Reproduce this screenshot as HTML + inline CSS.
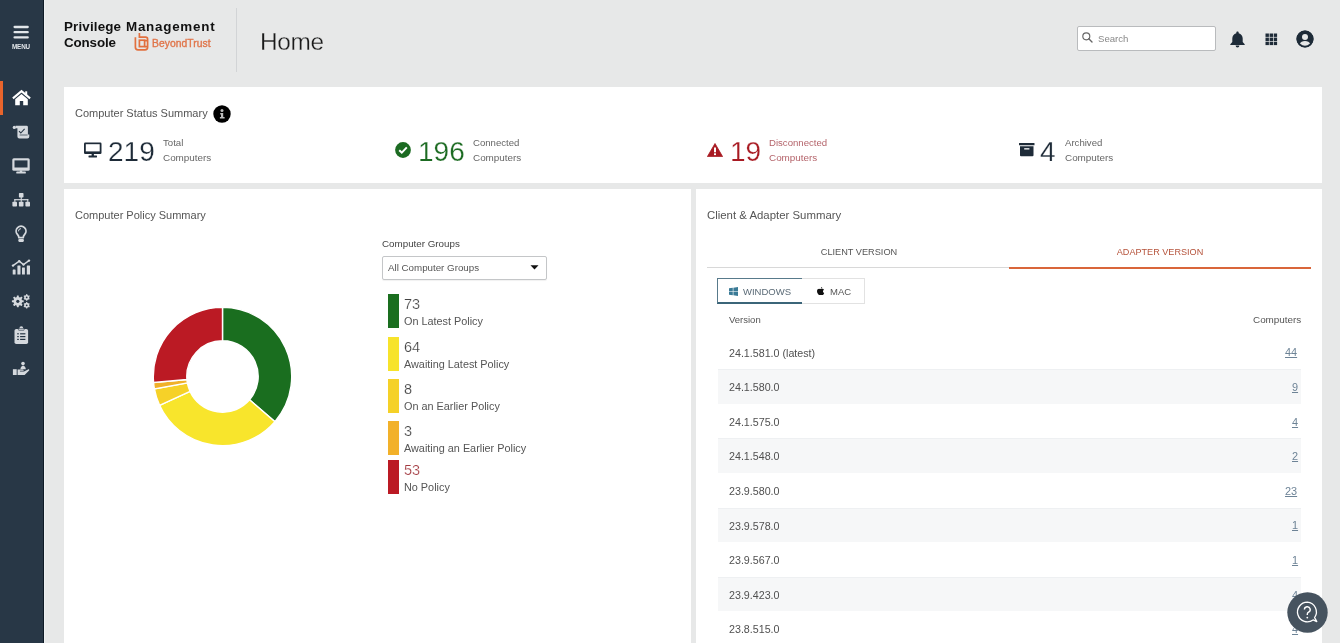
<!DOCTYPE html>
<html><head><meta charset="utf-8"><title>Home</title>
<style>
html,body{margin:0;padding:0;width:1340px;height:643px;overflow:hidden;background:#e7e8e8;font-family:"Liberation Sans",sans-serif;}
.t{position:absolute;white-space:nowrap;line-height:1;will-change:transform;}
#side{position:absolute;left:0;top:0;width:42.5px;height:643px;background:#283746;}
#sideedge{position:absolute;left:42.5px;top:0;width:1px;height:643px;background:#0e1a25;}
#sidelight{position:absolute;left:43.5px;top:0;width:1.5px;height:643px;background:#edf0f2;}
.card{position:absolute;background:#fff;}
svg{display:block}
</style></head><body>
<div id="side"></div><div id="sideedge"></div><div id="sidelight"></div><svg style="position:absolute;left:0;top:0" width="43" height="50" viewBox="0 0 43 50"><g stroke="#e2e6ea" stroke-width="2.3" stroke-linecap="round"><path d="M14.6 27 H27.7"/><path d="M14.6 32.2 H27.7"/><path d="M14.6 37.4 H27.7"/></g></svg><div class="t" style="left:12.2px;top:43.57px;font-size:6.3px;color:#e2e6ea;font-weight:bold;letter-spacing:-0.15px">MENU</div>
<div style="position:absolute;left:0;top:81px;width:2.5px;height:34.4px;background:#e8642c"></div><svg style="position:absolute;left:0;top:80px" width="43" height="310" viewBox="0 80 43 310">
<!-- home -->
<path d="M12.9 98.4 L21.5 91.2 L30.1 98.4" fill="none" stroke="#fff" stroke-width="2.1" stroke-linejoin="miter"/>
<rect x="25.2" y="91.3" width="2" height="4.2" fill="#fff"/>
<path d="M15.2 99.2 L21.5 93.9 L27.8 99.2 V105.2 H23.2 V101 H19.8 V105.2 H15.2 Z" fill="#fff"/>
<!-- scroll -->
<g fill="#d5d9de">
<circle cx="14.3" cy="127.4" r="1.6"/>
<path d="M15.6 125.8 H26.6 a1.3 1.3 0 0 1 1.3 1.3 V134.6 H29.3 V136.4 a2 2 0 0 1 -2 2 H19.4 a2 2 0 0 1 -2 -2 V128.2 H15.6 Z"/>
</g>
<path d="M19 131.2 L20.8 133 L24.6 128.8" fill="none" stroke="#283746" stroke-width="1.1"/>
<path d="M19.6 135 H27.6" stroke="#283746" stroke-width="0.7"/>
<!-- monitor -->
<rect x="12.3" y="158.2" width="17.4" height="12.6" rx="1.6" fill="#d5d9de"/>
<rect x="14.5" y="160.4" width="13" height="7.1" fill="#283746"/>
<rect x="19.8" y="170.4" width="2.4" height="1.6" fill="#d5d9de"/>
<rect x="16.2" y="171.5" width="9.7" height="2.1" rx="0.9" fill="#d5d9de"/>
<!-- org chart -->
<g fill="#d5d9de">
<rect x="18.9" y="193" width="4.6" height="4.4" rx="0.7"/>
<rect x="20.7" y="197" width="1.1" height="2.6"/>
<rect x="14.3" y="199.1" width="14" height="1.2"/>
<rect x="14.3" y="199.1" width="1.1" height="2.8"/>
<rect x="27.2" y="199.1" width="1.1" height="2.8"/>
<rect x="20.7" y="199.1" width="1.1" height="2.8"/>
<rect x="12.4" y="201.7" width="4.6" height="4.8" rx="0.7"/>
<rect x="18.9" y="201.7" width="4.6" height="4.8" rx="0.7"/>
<rect x="25.4" y="201.7" width="4.6" height="4.8" rx="0.7"/>
</g>
<!-- lightbulb -->
<path d="M18.9 237.6 C18.8 236.2 18.2 235.3 17.4 234.4 A4.9 4.9 0 1 1 24.7 234.4 C23.9 235.3 23.3 236.2 23.2 237.6 Z" fill="none" stroke="#d5d9de" stroke-width="1.8" stroke-linejoin="round"/>
<path d="M18.4 231.4 A2.8 2.8 0 0 1 21 228.6" fill="none" stroke="#d5d9de" stroke-width="1"/>
<rect x="18.3" y="238.9" width="5.6" height="3" rx="1.1" fill="#d5d9de"/>
<!-- chart -->
<g fill="#d5d9de">
<path d="M13 265.6 L19.2 261.2 L23.5 264.6 L29 260.6" fill="none" stroke="#d5d9de" stroke-width="1.5"/>
<circle cx="13" cy="265.6" r="1.2"/><circle cx="19.2" cy="261.2" r="1.2"/><circle cx="23.5" cy="264.6" r="1.2"/><circle cx="29" cy="260.6" r="1.2"/>
<rect x="12.7" y="269.6" width="2.9" height="5" rx="0.4"/>
<rect x="17.4" y="265.6" width="3.1" height="9" rx="0.4"/>
<rect x="22" y="267.4" width="2.9" height="7.2" rx="0.4"/>
<rect x="26.8" y="265.6" width="3.2" height="9" rx="0.4"/>
</g>
<!-- gears -->
<g fill="#d5d9de">
<circle cx="17.8" cy="301.3" r="4.4"/>
<rect x="16.8" y="295.4" width="2" height="11.8" rx="0.4" transform="rotate(0 17.8 301.3)"/><rect x="16.8" y="295.4" width="2" height="11.8" rx="0.4" transform="rotate(45 17.8 301.3)"/><rect x="16.8" y="295.4" width="2" height="11.8" rx="0.4" transform="rotate(90 17.8 301.3)"/><rect x="16.8" y="295.4" width="2" height="11.8" rx="0.4" transform="rotate(135 17.8 301.3)"/>
<circle cx="26.7" cy="297.4" r="2.5"/>
<rect x="26.1" y="294.1" width="1.2" height="6.6" rx="0.3" transform="rotate(0 26.7 297.4)"/><rect x="26.1" y="294.1" width="1.2" height="6.6" rx="0.3" transform="rotate(60 26.7 297.4)"/><rect x="26.1" y="294.1" width="1.2" height="6.6" rx="0.3" transform="rotate(120 26.7 297.4)"/>
<circle cx="26.7" cy="305.3" r="2.5"/>
<rect x="26.1" y="302" width="1.2" height="6.6" rx="0.3" transform="rotate(0 26.7 305.3)"/><rect x="26.1" y="302" width="1.2" height="6.6" rx="0.3" transform="rotate(60 26.7 305.3)"/><rect x="26.1" y="302" width="1.2" height="6.6" rx="0.3" transform="rotate(120 26.7 305.3)"/>
</g>
<circle cx="17.8" cy="301.3" r="1.6" fill="#283746"/>
<circle cx="26.7" cy="297.4" r="0.9" fill="#283746"/>
<circle cx="26.7" cy="305.3" r="0.9" fill="#283746"/>
<!-- clipboard -->
<rect x="14.5" y="328.9" width="13.6" height="15.1" rx="1.8" fill="#d5d9de"/>
<circle cx="21.3" cy="328.2" r="1.9" fill="#d5d9de"/>
<rect x="18.4" y="328.6" width="5.8" height="1.7" rx="0.6" fill="#d5d9de" stroke="#283746" stroke-width="0.6"/>
<g fill="#283746">
<rect x="17.2" y="333.2" width="1.6" height="1.2"/><rect x="20.1" y="333.2" width="5.3" height="1.2"/>
<rect x="17.2" y="336" width="1.6" height="1.2"/><rect x="20.1" y="336" width="5.3" height="1.2"/>
<rect x="17.2" y="338.8" width="1.6" height="1.2"/><rect x="20.1" y="338.8" width="5.3" height="1.2"/>
</g>
<!-- hand -->
<g fill="#d5d9de">
<circle cx="23" cy="363.6" r="1.8"/>
<path d="M20.4 369.3 C20.6 367.1 21.6 365.7 23.1 365.7 C24.6 365.7 25.6 367.1 25.8 369.3 Z"/>
<rect x="12.9" y="369.2" width="3.8" height="5.8"/>
<path d="M17.6 369.6 H22.3 c0.9 0 1.4 0.5 1.4 1.1 H19.9 V371.6 H24 L28 369.4 c0.9 -0.45 1.7 0.4 1.1 1.1 L24.6 375 H17.6 Z"/>
</g>
</svg><div class="t" style="left:63.8px;top:19.56px;font-size:13.4px;font-weight:bold;color:#111;letter-spacing:0.15px">Privilege</div>
<div class="t" style="left:125.8px;top:19.56px;font-size:13.4px;font-weight:bold;color:#111;letter-spacing:0.75px">Management</div>
<div class="t" style="left:63.8px;top:35.96px;font-size:13.4px;font-weight:bold;color:#111;letter-spacing:-0.15px">Console</div>
<svg style="position:absolute;left:134px;top:32px" width="16" height="20" viewBox="0 0 16 20">
<g fill="none" stroke="#e2703f" stroke-width="1.7">
<path d="M5.4 1 V5.2 H11.6 a2 2 0 0 1 2 2 V15.2 a2.6 2.6 0 0 1 -2.6 2.6 H4 a2.6 2.6 0 0 1 -2.6 -2.6 V5.2"/>
<rect x="5.4" y="8.2" width="5.2" height="6.4"/>
<path d="M13.6 8.6 H10.6"/><path d="M13.6 14.6 H10.6"/>
</g>
</svg><div class="t" style="left:152.4px;top:38.68px;font-size:10.3px;color:#e0754a;letter-spacing:0.05px;-webkit-text-stroke:0.35px #e0754a">BeyondTrust</div>
<div style="position:absolute;left:236px;top:8px;width:1px;height:64px;background:#d2d4d6"></div><div class="t" style="left:260px;top:30.25px;font-size:24.4px;color:#1a1a1a;letter-spacing:-0.3px;-webkit-text-stroke:0.3px #e7e8e8">Home</div>
<div style="position:absolute;left:1077px;top:26px;width:137px;height:23px;border:1px solid #b9bbbd;border-radius:2px;background:#fff"></div><svg style="position:absolute;left:1082px;top:32px" width="11" height="11" viewBox="0 0 11 11">
<circle cx="4.3" cy="4.3" r="3.5" fill="none" stroke="#666" stroke-width="1.15"/>
<path d="M6.8 6.8 L10 10" stroke="#666" stroke-width="1.35" stroke-linecap="round"/></svg><div class="t" style="left:1097.5px;top:34.37px;font-size:9.6px;color:#888">Search</div>
<svg style="position:absolute;left:1229px;top:31px" width="17" height="17" viewBox="0 0 17 17">
<path d="M8.5 0.6 c-0.7 0 -1.2 0.5 -1.2 1.1 v0.5 C4.8 2.8 3.3 4.9 3.3 7.4 V11 L1.3 13.2 V14 H15.7 V13.2 L13.7 11 V7.4 C13.7 4.9 12.2 2.8 9.7 2.2 V1.7 C9.7 1.1 9.2 0.6 8.5 0.6 Z" fill="#1e2b38"/>
<path d="M6.6 14.6 a1.9 1.9 0 0 0 3.8 0 Z" fill="#1e2b38"/></svg><svg style="position:absolute;left:1265px;top:33px" width="13" height="13" viewBox="0 0 13 13"><g fill="#1e2b38"><rect x="0.5" y="0.5" width="3.4" height="3.4"/><rect x="0.5" y="4.6" width="3.4" height="3.4"/><rect x="0.5" y="8.7" width="3.4" height="3.4"/><rect x="4.6" y="0.5" width="3.4" height="3.4"/><rect x="4.6" y="4.6" width="3.4" height="3.4"/><rect x="4.6" y="8.7" width="3.4" height="3.4"/><rect x="8.7" y="0.5" width="3.4" height="3.4"/><rect x="8.7" y="4.6" width="3.4" height="3.4"/><rect x="8.7" y="8.7" width="3.4" height="3.4"/></g></svg><svg style="position:absolute;left:1296px;top:30px" width="18" height="18" viewBox="0 0 18 18">
<circle cx="9" cy="9" r="8.5" fill="#1e2b38"/>
<circle cx="9" cy="7" r="3" fill="#e7e8e8"/>
<path d="M3.6 14.2 C4.5 11.8 6.5 11 9 11 C11.5 11 13.5 11.8 14.4 14.2 A7 7 0 0 1 3.6 14.2 Z" fill="#e7e8e8"/><circle cx="9" cy="9" r="7.6" fill="none" stroke="#1e2b38" stroke-width="1.9"/></svg><div class="card" style="left:64px;top:87px;width:1258px;height:96px"></div><div class="card" style="left:64px;top:189px;width:627px;height:460px"></div><div class="card" style="left:696px;top:189px;width:626px;height:460px"></div><div class="t" style="left:75px;top:107.69px;font-size:11px;color:#555">Computer Status Summary</div>
<svg style="position:absolute;left:213px;top:105px" width="18" height="18" viewBox="0 0 18 18">
<circle cx="9" cy="9" r="8.7" fill="#000"/>
<circle cx="9" cy="5.6" r="1.5" fill="#bdbdbd"/>
<path d="M7.2 8 H10.2 V12 H11.6 V13.6 H6.9 V12 H8 V9.4 H7.2 Z" fill="#bdbdbd"/></svg><svg style="position:absolute;left:84px;top:142px" width="18" height="16" viewBox="0 0 18 16">
<rect x="0" y="0.5" width="17.5" height="11.5" rx="1.2" fill="#1e2b38"/>
<rect x="1.8" y="2.2" width="13.9" height="7.2" fill="#fff"/>
<rect x="7.6" y="11.5" width="2.3" height="2.5" fill="#1e2b38"/>
<rect x="4.5" y="13.6" width="8.5" height="1.8" rx="0.4" fill="#1e2b38"/></svg><div class="t" style="left:107.6px;top:137.60px;font-size:28px;-webkit-text-stroke:0.25px #fff;color:#1e2b38">219</div>
<div class="t" style="left:163px;top:137.57px;font-size:9.6px;color:#666">Total</div>
<div class="t" style="left:163px;top:152.82px;font-size:9.9px;color:#666">Computers</div>
<svg style="position:absolute;left:395px;top:142px" width="16" height="16" viewBox="0 0 16 16">
<circle cx="8" cy="8" r="7.9" fill="#1c6b22"/>
<path d="M4.2 8.2 L6.8 10.6 L11.8 5.4" stroke="#fff" stroke-width="2" fill="none"/></svg><div class="t" style="left:417.6px;top:137.60px;font-size:28px;-webkit-text-stroke:0.25px #fff;color:#1c6b22">196</div>
<div class="t" style="left:473px;top:137.57px;font-size:9.6px;color:#666">Connected</div>
<div class="t" style="left:473px;top:152.82px;font-size:9.9px;color:#666">Computers</div>
<svg style="position:absolute;left:707px;top:143px" width="16" height="14" viewBox="0 0 16 14">
<path d="M8 0.5 L15.6 13.6 H0.4 Z" fill="#a81a22" stroke="#a81a22" stroke-width="0.8" stroke-linejoin="round"/>
<rect x="7" y="4.5" width="2" height="4.8" fill="#fff"/><rect x="7" y="10.3" width="2" height="1.8" fill="#fff"/></svg><div class="t" style="left:730.4px;top:137.60px;font-size:28px;-webkit-text-stroke:0.25px #fff;color:#a81a22">19</div>
<div class="t" style="left:769px;top:137.57px;font-size:9.6px;color:#b4636a">Disconnected</div>
<div class="t" style="left:769px;top:152.82px;font-size:9.9px;color:#b4636a">Computers</div>
<svg style="position:absolute;left:1019px;top:143px" width="16" height="14" viewBox="0 0 16 14">
<rect x="0" y="0" width="15.5" height="2.3" rx="0.3" fill="#1e2b38"/>
<path d="M1 3.3 H14.5 V12.2 a1 1 0 0 1 -1 1 H2 a1 1 0 0 1 -1 -1 Z" fill="#1e2b38"/>
<rect x="5.2" y="5.2" width="5.2" height="1.3" fill="#fff"/></svg><div class="t" style="left:1040px;top:137.60px;font-size:28px;-webkit-text-stroke:0.25px #fff;color:#1e2b38">4</div>
<div class="t" style="left:1065px;top:137.57px;font-size:9.6px;color:#666">Archived</div>
<div class="t" style="left:1065px;top:152.82px;font-size:9.9px;color:#666">Computers</div>
<div class="t" style="left:75px;top:209.59px;font-size:11px;color:#555">Computer Policy Summary</div>
<div class="t" style="left:382px;top:238.90px;font-size:9.8px;color:#444">Computer Groups</div>
<div style="position:absolute;left:382px;top:255.5px;width:163px;height:22px;border:1px solid #c4c6c8;border-radius:2px;background:#fff;box-shadow:0 1px 1px rgba(0,0,0,0.06)"></div><div class="t" style="left:388px;top:262.85px;font-size:9.75px;color:#555">All Computer Groups</div>
<svg style="position:absolute;left:530px;top:265px" width="9" height="5" viewBox="0 0 9 5"><path d="M0.5 0.3 H8.5 L4.5 4.6 Z" fill="#111"/></svg><div style="position:absolute;left:388px;top:294px;width:11px;height:34px;background:#1a6e1f"></div><div class="t" style="left:404px;top:297.33px;font-size:14.5px;color:#444;-webkit-text-stroke:0.2px #fff">73</div>
<div class="t" style="left:404px;top:316.02px;font-size:10.85px;color:#555">On Latest Policy</div>
<div style="position:absolute;left:388px;top:337px;width:11px;height:34px;background:#f7e32b"></div><div class="t" style="left:404px;top:340.33px;font-size:14.5px;color:#444;-webkit-text-stroke:0.2px #fff">64</div>
<div class="t" style="left:404px;top:359.02px;font-size:10.85px;color:#555">Awaiting Latest Policy</div>
<div style="position:absolute;left:388px;top:379px;width:11px;height:34px;background:#f5d128"></div><div class="t" style="left:404px;top:382.33px;font-size:14.5px;color:#444;-webkit-text-stroke:0.2px #fff">8</div>
<div class="t" style="left:404px;top:401.02px;font-size:10.85px;color:#555">On an Earlier Policy</div>
<div style="position:absolute;left:388px;top:421px;width:11px;height:34px;background:#f2b12a"></div><div class="t" style="left:404px;top:424.33px;font-size:14.5px;color:#444;-webkit-text-stroke:0.2px #fff">3</div>
<div class="t" style="left:404px;top:443.02px;font-size:10.85px;color:#555">Awaiting an Earlier Policy</div>
<div style="position:absolute;left:388px;top:460px;width:11px;height:34px;background:#bb1a24"></div><div class="t" style="left:404px;top:463.33px;font-size:14.5px;color:#a33a40;-webkit-text-stroke:0.2px #fff">53</div>
<div class="t" style="left:404px;top:482.02px;font-size:10.85px;color:#555">No Policy</div>
<svg style="position:absolute;left:152.4px;top:305.5px" width="141" height="141" viewBox="0 0 141 141"><path d="M70.50 1.30 A69.2 69.2 0 0 1 122.93 115.67 L97.55 93.80 A35.7 35.7 0 0 0 70.50 34.80 Z" fill="#1a6e1f" stroke="#fff" stroke-width="1.4"/><path d="M122.93 115.67 A69.2 69.2 0 0 1 7.59 99.34 L38.05 85.38 A35.7 35.7 0 0 0 97.55 93.80 Z" fill="#f8e52c" stroke="#fff" stroke-width="1.4"/><path d="M7.59 99.34 A69.2 69.2 0 0 1 2.41 82.87 L35.38 76.88 A35.7 35.7 0 0 0 38.05 85.38 Z" fill="#f6d128" stroke="#fff" stroke-width="1.4"/><path d="M2.41 82.87 A69.2 69.2 0 0 1 1.56 76.44 L34.93 73.57 A35.7 35.7 0 0 0 35.38 76.88 Z" fill="#f0b02a" stroke="#fff" stroke-width="1.4"/><path d="M1.56 76.44 A69.2 69.2 0 0 1 70.50 1.30 L70.50 34.80 A35.7 35.7 0 0 0 34.93 73.57 Z" fill="#bb1a24" stroke="#fff" stroke-width="1.4"/></svg><div class="t" style="left:707px;top:209.95px;font-size:11.4px;color:#555">Client &amp; Adapter Summary</div>
<div class="t" style="left:858.5px;top:247.61px;font-size:9.2px;color:#555;transform:translateX(-50%)">CLIENT VERSION</div>
<div class="t" style="left:1160px;top:247.70px;font-size:9.1px;color:#b5523a;transform:translateX(-50%)">ADAPTER VERSION</div>
<div style="position:absolute;left:707px;top:267px;width:302px;height:1px;background:#d8d8d8"></div><div style="position:absolute;left:1009px;top:266.5px;width:302px;height:2px;background:#d9663a"></div><div style="position:absolute;left:717px;top:278px;width:84px;height:23px;border:1px solid #587a8b;border-bottom:2px solid #3b6579;background:#fff"></div><div style="position:absolute;left:802px;top:278px;width:62px;height:24px;border:1px solid #e2e2e2;border-left:none;background:#fff"></div><svg style="position:absolute;left:729px;top:287px" width="9" height="9" viewBox="0 0 9 9"><g fill="#3a7a96">
<path d="M0 1.3 L3.8 0.8 V4.2 H0 Z"/><path d="M4.4 0.7 L9 0 V4.2 H4.4 Z"/><path d="M0 4.8 H3.8 V8.2 L0 7.7 Z"/><path d="M4.4 4.8 H9 V9 L4.4 8.3 Z"/></g></svg><div class="t" style="left:742.5px;top:286.56px;font-size:9.5px;color:#5a6a76">WINDOWS</div>
<svg style="position:absolute;left:817.3px;top:287.2px" width="7.3" height="8.2" viewBox="0 0 8 9"><path d="M5.6 0 c0.1 0.8 -0.5 1.7 -1.4 1.8 c-0.1 -0.8 0.6 -1.7 1.4 -1.8 Z M4 2.3 c0.5 0 1 -0.4 1.7 -0.4 c0.9 0 1.6 0.5 1.9 1.1 c-1.6 0.9 -1.3 3.1 0.3 3.6 c-0.4 1.1 -1.2 2.4 -2 2.4 c-0.6 0 -0.8 -0.3 -1.4 -0.3 c-0.7 0 -0.9 0.3 -1.5 0.3 C1.9 9 0 6.8 0 4.6 C0 2.6 1.3 1.9 2.3 1.9 c0.7 0 1.1 0.4 1.7 0.4 Z" fill="#111"/></svg><div class="t" style="left:829.5px;top:286.56px;font-size:9.5px;color:#555">MAC</div>
<div class="t" style="left:728.5px;top:315.26px;font-size:9.5px;color:#555">Version</div>
<div class="t" style="right:39px;top:314.62px;font-size:9.9px;color:#555">Computers</div>
<div class="t" style="left:728.5px;top:347.64px;font-size:10.7px;color:#505050">24.1.581.0 (latest)</div>
<div class="t" style="right:42.40000000000009px;top:347.47px;font-size:10.9px;color:#6d8396;text-decoration:underline">44</div>
<div style="position:absolute;left:718px;top:369.20px;width:583px;height:34.6px;background:#f6f7f8;border-top:1px solid #eef0f2;box-sizing:border-box"></div><div class="t" style="left:728.5px;top:382.24px;font-size:10.7px;color:#505050">24.1.580.0</div>
<div class="t" style="right:42.40000000000009px;top:382.07px;font-size:10.9px;color:#6d8396;text-decoration:underline">9</div>
<div class="t" style="left:728.5px;top:416.84px;font-size:10.7px;color:#505050">24.1.575.0</div>
<div class="t" style="right:42.40000000000009px;top:416.67px;font-size:10.9px;color:#6d8396;text-decoration:underline">4</div>
<div style="position:absolute;left:718px;top:438.40px;width:583px;height:34.6px;background:#f6f7f8;border-top:1px solid #eef0f2;box-sizing:border-box"></div><div class="t" style="left:728.5px;top:451.44px;font-size:10.7px;color:#505050">24.1.548.0</div>
<div class="t" style="right:42.40000000000009px;top:451.27px;font-size:10.9px;color:#6d8396;text-decoration:underline">2</div>
<div class="t" style="left:728.5px;top:486.04px;font-size:10.7px;color:#505050">23.9.580.0</div>
<div class="t" style="right:42.40000000000009px;top:485.87px;font-size:10.9px;color:#6d8396;text-decoration:underline">23</div>
<div style="position:absolute;left:718px;top:507.60px;width:583px;height:34.6px;background:#f6f7f8;border-top:1px solid #eef0f2;box-sizing:border-box"></div><div class="t" style="left:728.5px;top:520.64px;font-size:10.7px;color:#505050">23.9.578.0</div>
<div class="t" style="right:42.40000000000009px;top:520.47px;font-size:10.9px;color:#6d8396;text-decoration:underline">1</div>
<div class="t" style="left:728.5px;top:555.24px;font-size:10.7px;color:#505050">23.9.567.0</div>
<div class="t" style="right:42.40000000000009px;top:555.07px;font-size:10.9px;color:#6d8396;text-decoration:underline">1</div>
<div style="position:absolute;left:718px;top:576.80px;width:583px;height:34.6px;background:#f6f7f8;border-top:1px solid #eef0f2;box-sizing:border-box"></div><div class="t" style="left:728.5px;top:589.84px;font-size:10.7px;color:#505050">23.9.423.0</div>
<div class="t" style="right:42.40000000000009px;top:589.67px;font-size:10.9px;color:#6d8396;text-decoration:underline">4</div>
<div class="t" style="left:728.5px;top:624.44px;font-size:10.7px;color:#505050">23.8.515.0</div>
<div class="t" style="right:42.40000000000009px;top:624.27px;font-size:10.9px;color:#6d8396;text-decoration:underline">4</div>
<svg style="position:absolute;left:1287px;top:592px" width="41" height="41" viewBox="0 0 41 41">
<circle cx="20.5" cy="20.5" r="20.2" fill="#46535f"/>
<path d="M20.3 10.2 a9.8 9.8 0 1 0 5.8 17.7 L29.8 29.6 L27.6 25.6 A9.8 9.8 0 0 0 20.3 10.2 Z" fill="none" stroke="#fff" stroke-width="1.3" stroke-linejoin="round"/>
<path d="M17.4 17.6 a2.9 2.9 0 1 1 4.2 2.6 c-0.9 0.5 -1.3 1 -1.3 2 V23" fill="none" stroke="#fff" stroke-width="1.4"/>
<circle cx="20.3" cy="25.6" r="0.9" fill="#fff"/></svg>
</body></html>
